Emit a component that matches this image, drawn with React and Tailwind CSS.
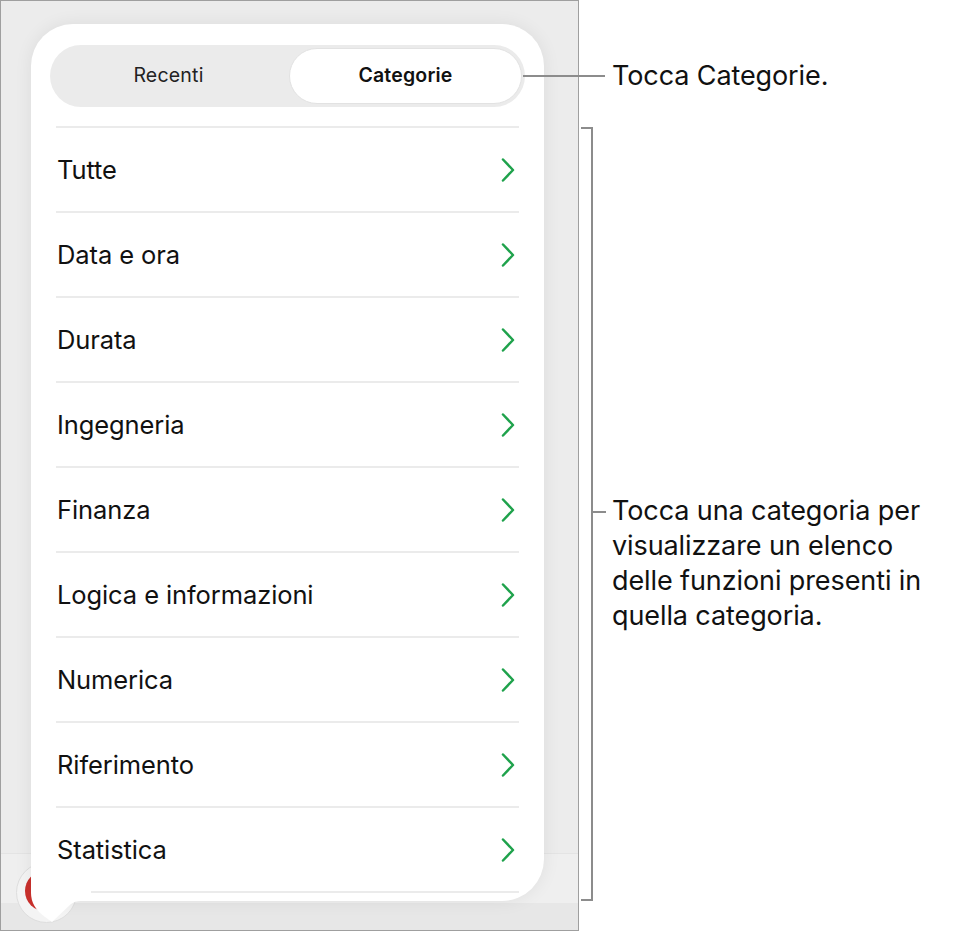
import { useState } from "react";

const categories = [
    "Tutte",
    "Data e ora",
    "Durata",
    "Ingegneria",
    "Finanza",
    "Logica e informazioni",
    "Numerica",
    "Riferimento",
    "Statistica",
];

function Chevron() {
    return (
        <svg width="16" height="26" viewBox="0 0 16 26" fill="none" className="shrink-0">
            <path d="M3 2.5 L13 13 L3 23.5" stroke="#1fa24c" strokeWidth="2.5" strokeLinecap="round" strokeLinejoin="round" />
        </svg>
    );
}

function Segmented({ tab, setTab }) {
    return (
        <div className="h-[62px] rounded-full bg-[#ebebeb] p-[3px] flex">
            {["Recenti", "Categorie"].map((t) => (
                <button
                    key={t}
                    onClick={() => setTab(t)}
                    className={
                        tab === t
                            ? "flex-1 rounded-full bg-white border border-[#e2e2e2] text-[19.5px] font-semibold text-[#111] ml-[5px] tracking-[0.2px]"
                            : "flex-1 rounded-full text-[19.5px] font-normal text-[#222] tracking-[0.2px]"
                    }
                >
                    {t}
                </button>
            ))}
        </div>
    );
}

export default function App() {
    const [tab, setTab] = useState("Categorie");

    return (
        <div className="relative w-[959px] h-[932px] bg-white flex font-['Inter',sans-serif] text-[#111] overflow-hidden">

            {/* device screen */}
            <div className="relative w-[579px] h-[931px] shrink-0 border border-[#9f9f9f] bg-[#ececec] pl-[30px] pt-[23px]">

                {/* bottom toolbar under the popover */}
                <div className="absolute left-0 right-0 bottom-0 h-[77px] bg-[#efefef] border-t border-[#e4e4e4]">
                    <div className="absolute left-0 right-0 bottom-0 h-[27px] bg-[#e7e7e7]" />
                </div>

                {/* function button peeking out from behind */}
                <div className="absolute left-[15px] top-[861px] w-[61px] h-[61px] rounded-full bg-[#f4f4f4] border border-[#dedede] flex items-center justify-center">
                    <div className="w-[40px] h-[40px] rounded-full bg-[#c8302c] -ml-[3px] -mt-[3px]" />
                </div>

                {/* popover */}
                <div className="relative w-[513px] h-[877px] bg-white rounded-[42px] rounded-bl-[24px] shadow-[0_0_18px_rgba(0,0,0,0.07)] px-[19px] pt-[21px]">
                    <svg className="absolute left-0 top-[845px]" width="60" height="54" viewBox="0 0 60 54">
                        <path d="M0 0 L0 24 Q0 38 14 48 L21 53 L40 35 Q44 32 50 32 L60 32 L60 0 Z" fill="#fff" />
                    </svg>

                    <Segmented tab={tab} setTab={setTab} />

                    <div className="mt-[19px] mx-[6px]">
                        {categories.map((c) => (
                            <div key={c} className="h-[85px] border-t-2 border-[#ebebeb] flex items-center justify-between pr-[3px]">
                                <span className="text-[25.5px] leading-none pl-[1px] tracking-[-0.1px]">{c}</span>
                                <Chevron />
                            </div>
                        ))}
                        <div className="border-t-2 border-[#ebebeb]" />
                    </div>
                </div>
            </div>

            {/* callout texts */}
            <div className="ml-[33px] flex flex-col text-[27px] leading-[35px] text-[#111] tracking-[-0.1px]">
                <p className="mt-[58px]">Tocca Categorie.</p>
                <p className="mt-[400px]">
                    Tocca una categoria per
                    <br />
                    visualizzare un elenco
                    <br />
                    delle funzioni presenti in
                    <br />
                    quella categoria.
                </p>
            </div>

            {/* leader lines */}
            <div className="absolute left-[523px] top-[75px] w-[82px] h-[2px] bg-[#8c8c8c]" />
            <div className="absolute left-[581px] top-[127px] w-[12px] h-[774px] border-t-2 border-r-2 border-b-2 border-[#8c8c8c]" />
            <div className="absolute left-[593px] top-[511px] w-[13px] h-[2px] bg-[#8c8c8c]" />
        </div>
    );
}
